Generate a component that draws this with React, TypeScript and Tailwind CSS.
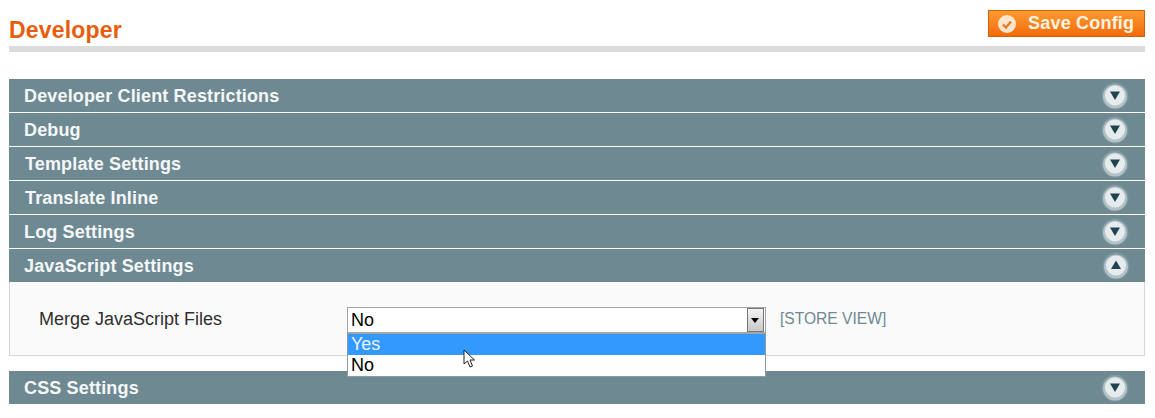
import React from "react";

const font = "font-['Liberation_Sans',Arial,sans-serif]";

const Toggle = ({ up = false }: { up?: boolean }) => (
  <svg width="28" height="28" viewBox="0 0 28 28" className={up ? "relative left-[1px] shrink-0" : "shrink-0"}>
    <circle cx="14" cy="14" r="13.5" fill="#8198a0" />
    <circle cx="14" cy="14.5" r="12" fill="#b3c3c8" />
    <circle cx="14" cy="13.5" r="10" fill="#e6ecee" />
    <path d={up ? "M14 8.5 L19 17 L9 17 Z" : "M9 9.5 L19 9.5 L14 18 Z"} fill="#1f4350" />
  </svg>
);

const Row = ({ title, up, offset = "pl-[15px]" }: { title: string; up?: boolean; offset?: string }) => (
  <div className={`flex h-[33px] items-center justify-between bg-[#6f8992] pr-[16px] ${offset}`}>
    <span className="pt-[1px] text-[18px] leading-none font-bold tracking-[0.15px] text-[#f4f7f8]">{title}</span>
    <Toggle up={up} />
  </div>
);

const Dropdown = () => (
  <div className="relative h-[26px] w-[419px] border border-[#a5a5a5] bg-white">
    <div className="flex h-full items-center justify-between pl-[3px] pr-[1px]">
      <span className="text-[18px] text-black">No</span>
      <div className="flex h-[24px] w-[17px] items-center justify-center border border-[#777] bg-gradient-to-b from-[#f4f4f4] to-[#c8c8c8]">
        <svg width="9" height="5" viewBox="0 0 9 5">
          <path d="M0 0 H8 L4 5 Z" fill="#000" />
        </svg>
      </div>
    </div>
    <div className="absolute top-[24px] left-[-1px] z-10 w-[419px] border border-t-2 border-[#8d9aa8] border-t-[#a5a5a5] bg-white text-[18px] leading-[21px]">
      <div className="h-[21px] bg-[#3399ff] pl-[3px] text-[#e9f3ff]">Yes</div>
      <div className="h-[21px] pl-[3px] text-black">No</div>
    </div>
    <svg width="13" height="20" viewBox="0 0 13 20" className="absolute top-[41px] left-[115px] z-20">
      <path d="M1 1 V15 L4.5 12 L7 18 L9.5 17 L7 11 H11.5 Z" fill="#fff" stroke="#222" strokeWidth="1" />
    </svg>
  </div>
);

export default function App() {
  return (
    <div className={`${font} h-[418px] w-[1155px] overflow-hidden bg-white pl-[9px] pr-[10px] pt-[10px]`}>
      <div className="flex h-[36px] items-start justify-between border-b-[6px] border-transparent">
        <h1 className="pt-[8px] text-[23px] leading-[24px] font-bold tracking-[0.2px] text-[#e85d0c]">Developer</h1>
        <button className="flex h-[27px] w-[157px] items-center border border-[#c8640e] bg-gradient-to-b from-[#fb9b2e] to-[#f36a08] pl-[8px] text-[18px] font-bold text-[#fff3e3]">
          <svg width="20" height="20" viewBox="0 0 20 20" className="mr-[11px] shrink-0">
            <circle cx="10" cy="10" r="9" fill="#fde6cf" />
            <path d="M6 10.5 L9 13.5 L14 7.5" fill="none" stroke="#ee7a1e" strokeWidth="2.4" />
          </svg>
          <span className="tracking-[0.2px]">Save Config</span>
        </button>
      </div>
      <div className="h-[6px] bg-[#dcdcdc]" />

      <div className="mt-[27px] flex flex-col gap-px">
        <Row title="Developer Client Restrictions" />
        <Row title="Debug" />
        <Row title="Template Settings" offset="pl-[16px]" />
        <Row title="Translate Inline" offset="pl-[16px]" />
        <Row title="Log Settings" />
        <Row title="JavaScript Settings" up />
      </div>
      <div className="flex h-[74px] items-start border border-t-0 border-[#d6d6d6] bg-[#fafafa] pl-[29px] pt-[25px]">
        <span className="w-[308px] text-[18px] leading-[25px] text-[#2f2f2f]">Merge JavaScript Files</span>
        <Dropdown />
        <span className="ml-[14px] text-[15.6px] leading-[24px] text-[#6f8992]">[STORE VIEW]</span>
      </div>
      <div className="mt-[15px]">
        <Row title="CSS Settings" />
      </div>
    </div>
  );
}
